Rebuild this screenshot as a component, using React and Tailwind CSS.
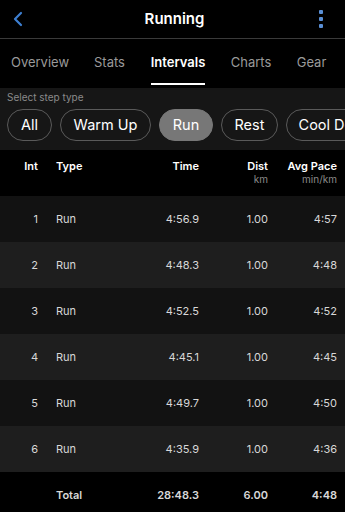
import { ChevronLeft } from 'lucide-react'

const rows = [
  ['1', 'Run', '4:56.9', '1.00', '4:57'],
  ['2', 'Run', '4:48.3', '1.00', '4:48'],
  ['3', 'Run', '4:52.5', '1.00', '4:52'],
  ['4', 'Run', '4:45.1', '1.00', '4:45'],
  ['5', 'Run', '4:49.7', '1.00', '4:50'],
  ['6', 'Run', '4:35.9', '1.00', '4:36'],
]

const tabs = [
  ['Overview', 'w-[56px]'],
  ['Stats', 'w-[31px]'],
  ['Intervals', 'w-[54px]'],
  ['Charts', 'w-[40px]'],
  ['Gear', 'w-[29px]'],
]
const pills = [
  ['All', 'w-[45px]'],
  ['Warm Up', 'w-[91px]'],
  ['Run', 'w-[54px]'],
  ['Rest', 'w-[57px]'],
  ['Cool Down', 'w-[100px]'],
]

export default function App() {
  return (
    <div className="w-[345px] h-[512px] overflow-hidden bg-black text-white font-['Inter',sans-serif]">
      {/* top bar */}
      <div className="h-[39px] flex items-center justify-between px-2 border-b border-[#3a3a3a]">
        <ChevronLeft size={24} strokeWidth={2.2} className="text-[#3d7fd1] -ml-0.5" />
        <span className="text-[15px] font-semibold">Running</span>
        <div className="flex flex-col gap-[3px] mr-[14px]">
          <span className="w-[4px] h-[4px] bg-[#5a8fd6] rounded-[1px]" />
          <span className="w-[4px] h-[4px] bg-[#5a8fd6] rounded-[1px]" />
          <span className="w-[4px] h-[4px] bg-[#5a8fd6] rounded-[1px]" />
        </div>
      </div>

      {/* tabs */}
      <div className="h-[49px] flex items-end pl-3 gap-[26px] whitespace-nowrap">
        {tabs.map(([t, w]) => (
          <div key={t} className={`flex flex-col items-center shrink-0 ${w}`}>
            <span className={`text-[13px] ${t === 'Intervals' ? 'font-semibold text-white' : 'text-[#9a9a9a]'}`}>{t}</span>
            <span className={`mt-[11px] h-[2px] w-full ${t === 'Intervals' ? 'bg-white' : 'bg-transparent'}`} />
            <span className="h-[3px]" />
          </div>
        ))}
      </div>

      {/* step filter */}
      <div className="h-[62px] bg-[#161616] pt-[2px]">
        <p className="text-[10px] text-[#8a8a8a] pl-[7px]">Select step type</p>
        <div className="flex gap-[8px] pl-[7px] mt-[4px] whitespace-nowrap">
          {pills.map(([p, w]) => (
            <span
              key={p}
              className={`h-[32px] flex items-center justify-center rounded-full text-[14.5px] shrink-0 ${w} ${
                p === 'Run' ? 'bg-[#777777] border border-[#777777]' : 'border border-[#5a5a5a]'
              }`}
            >{p}</span>
          ))}
        </div>
      </div>

      {/* table header */}
      <div className="h-[46px] flex pt-[9px] text-[11px] font-semibold leading-[14px]">
        <span className="w-[38px] text-right">Int</span>
        <span className="ml-[18px] w-[80px]">Type</span>
        <span className="w-[63px] text-right">Time</span>
        <div className="w-[69px] flex flex-col items-end">
          <span>Dist</span>
          <span className="font-normal text-[#8a8a8a] text-[10px] leading-[12px]">km</span>
        </div>
        <div className="w-[69px] flex flex-col items-end">
          <span>Avg Pace</span>
          <span className="font-normal text-[#8a8a8a] text-[10px] leading-[12px]">min/km</span>
        </div>
      </div>

      {/* rows */}
      {rows.map(([n, type, time, dist, pace], i) => (
        <div key={n} className={`h-[46px] flex items-center text-[11px] text-[#d8d8d8] ${i % 2 === 0 ? 'bg-[#121212]' : 'bg-[#1e1e1e]'}`}>
          <span className="w-[38px] text-right">{n}</span>
          <span className="ml-[18px] w-[80px]">{type}</span>
          <span className="w-[63px] text-right">{time}</span>
          <span className="w-[69px] text-right">{dist}</span>
          <span className="w-[69px] text-right">{pace}</span>
        </div>
      ))}

      {/* total */}
      <div className="h-[46px] flex items-center text-[11px] font-semibold text-[#d8d8d8]">
        <span className="w-[38px]" />
        <span className="ml-[18px] w-[80px]">Total</span>
        <span className="w-[63px] text-right">28:48.3</span>
        <span className="w-[69px] text-right">6.00</span>
        <span className="w-[69px] text-right">4:48</span>
      </div>
    </div>
  )
}
